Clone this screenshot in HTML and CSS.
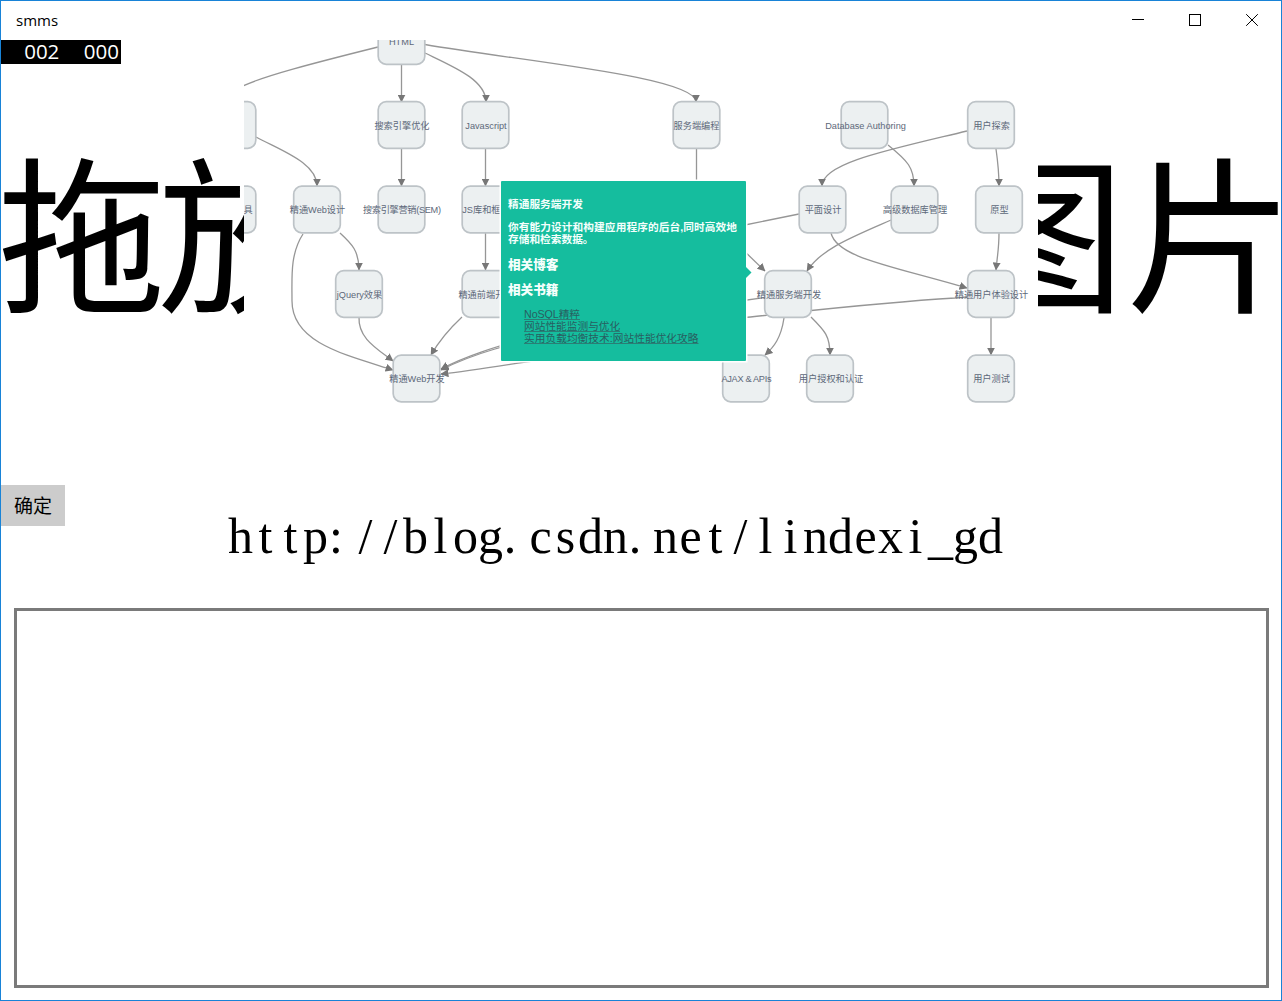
FILE: index.html
```html
<!DOCTYPE html>
<html lang="zh-CN">
<head>
<meta charset="utf-8">
<title>smms</title>
<link rel="stylesheet" href="styles.css">
</head>
<body>
<div class="window">
  <header class="titlebar">
    <span class="title">smms</span>
    <svg class="controls" viewBox="0 0 171 39" shape-rendering="crispEdges">
      <path d="M22 18.5h12"/>
      <rect x="79.5" y="13.5" width="11" height="11"/>
      <path class="close" shape-rendering="auto" d="M136.2 13.2l11.6 11.6M147.8 13.2l-11.6 11.6"/>
    </svg>
  </header>

  <main class="stage">
    <div class="counter"><span>002</span><span>000</span></div>
    <div class="headline"><span class="lead">拖放</span><span class="tail">图片</span></div>
    <svg class="diagram" viewBox="244 40 794 445">
      <defs>
        <marker id="arrow" markerUnits="userSpaceOnUse" markerWidth="8" markerHeight="8" viewBox="0 0 7 7" refX="6.5" refY="3.5" orient="auto"><path d="M0 0L7 3.5L0 7z"/></marker>
        <rect id="node" class="node" x="-23.3" y="-23.3" width="46.6" height="46.6" rx="8"/>
      </defs>
      <rect class="paper" x="244" y="40" width="794" height="445"/>
      <g class="edge">
        <path class="plain" d="M378 47C310 64 264 76 243 86"/>
        <path d="M401.5 65V102"/>
        <path d="M425 53C454 67 486 80 486 102"/>
        <path d="M425 44.500C520 61 696 77 696 102"/>
        <path d="M256 137C282 151 317 163 317 186"/>
        <path d="M401.500 149V186"/>
        <path d="M485.500 149V186"/>
        <path class="plain" d="M696.500 149V190"/>
        <path d="M303 234C290 254 292 277 292 301C292 343 346 355 393 370"/>
        <path d="M340 233C352 244 359 251 359 270"/>
        <path d="M485.500 233V270"/>
        <path d="M359 317C358 338 376 348 393 361"/>
        <path d="M462 317C447 331 439 341 431 355"/>
        <path d="M560 328C515 342 475 351 441 369"/>
        <path d="M560 333C510 344 474 353 441 370"/>
        <path d="M560 357C521 362 480 370 441 374"/>
        <path class="plain" d="M799 214L740 226"/>
        <path d="M740 247L765 271"/>
        <path class="plain" d="M740 301L768 297"/>
        <path class="plain" d="M740 318C800 312 872 303 955 298L978 296"/>
        <path d="M967 131C888 150 822 163 822 186"/>
        <path d="M888 145C908 161 914 168 914 186"/>
        <path d="M996 149C998 163 999 174 999 186"/>
        <path d="M891 220C852 237 821 249 807 271"/>
        <path d="M831 233C837 258 893 266 967 288"/>
        <path d="M999 233C999 249 997 258 996 270"/>
        <path d="M784 318C781 338 774 347 765 355"/>
        <path d="M811 317C825 331 830 336 830 355"/>
        <path d="M991 318V355"/>
      </g>
      <use href="#node" x="401.500" y="41"/>
      <use href="#node" x="232.500" y="125"/>
      <use href="#node" x="401.500" y="125"/>
      <use href="#node" x="485.500" y="125"/>
      <use href="#node" x="696.500" y="125"/>
      <use href="#node" x="864.500" y="125"/>
      <use href="#node" x="991" y="125"/>
      <use href="#node" x="232.500" y="209.500"/>
      <use href="#node" x="317" y="209.500"/>
      <use href="#node" x="401.500" y="209.500"/>
      <use href="#node" x="485.500" y="209.500"/>
      <use href="#node" x="822.500" y="209.500"/>
      <use href="#node" x="914.500" y="209.500"/>
      <use href="#node" x="999" y="209.500"/>
      <use href="#node" x="359" y="294"/>
      <use href="#node" x="485.500" y="294"/>
      <use href="#node" x="788" y="294"/>
      <use href="#node" x="991" y="294"/>
      <use href="#node" x="416.500" y="378.500"/>
      <use href="#node" x="746" y="378.500"/>
      <use href="#node" x="830" y="378.500"/>
      <use href="#node" x="991" y="378.500"/>
      <g class="label">
        <text x="401.500" y="44.500">HTML</text>
        <text x="402" y="129">搜索引擎优化</text>
        <text x="486" y="129">Javascript</text>
        <text x="696.500" y="129">服务端编程</text>
        <text x="865.500" y="129">Database Authoring</text>
        <text x="991.500" y="129">用户探索</text>
        <text x="248" y="213">具</text>
        <text x="317.500" y="213">精通Web设计</text>
        <text x="402" y="213" textLength="78">搜索引擎营销(SEM)</text>
        <text x="486" y="213">JS库和框架</text>
        <text x="823" y="213">平面设计</text>
        <text x="915" y="213">高级数据库管理</text>
        <text x="999.500" y="213">原型</text>
        <text x="359.500" y="297.500">jQuery效果</text>
        <text x="486" y="297.500">精通前端开发</text>
        <text x="789" y="297.500">精通服务端开发</text>
        <text x="991.500" y="297.500">精通用户体验设计</text>
        <text x="417" y="382">精通Web开发</text>
        <text x="746.500" y="382" textLength="50">AJAX &amp; APIs</text>
        <text x="831" y="382">用户授权和认证</text>
        <text x="991.500" y="382">用户测试</text>
      </g>
      <path class="halo" d="M499.500 179.500h248v183h-248z"/>
      <rect class="tip" x="501" y="181" width="245" height="180" rx="1"/>
      <path class="tip" d="M745.500 266.500L751.500 272.500L745.500 278.500z"/>
      <g class="tip-text">
        <text x="508" y="208">精通服务端开发</text>
        <text x="508" y="231" textLength="229">你有能力设计和构建应用程序的后台,同时高效地</text>
        <text x="508" y="243">存储和检索数据。</text>
        <text class="tip-heading" x="508" y="268.500">相关博客</text>
        <text class="tip-heading" x="508" y="293.700">相关书籍</text>
      </g>
      <g class="tip-link">
        <text x="524" y="317.500" textLength="56">NoSQL精粹</text>
        <text x="524" y="329.800">网站性能监测与优化</text>
        <text x="524" y="342" textLength="174.500">实用负载均衡技术:网站性能优化攻略</text>
        <path d="M524 319.500h56M524 331.500h96M524 343.500h174.500"/>
      </g>
    </svg>
  </main>

  <section class="actions">
    <button class="confirm">确定</button>
    <svg class="address" viewBox="0 0 790 80"><text y="68" x="12.500 37.500 62.500 87.500 108 137.500 162.500 187.500 212.500 237.500 262.500 282 312.500 337.500 362.500 387.500 407 437.500 462.500 487.500 512.500 537.500 562.500 587.500 612.500 637.500 662.500 687.500 712.500 737.500 762.500">http://blog.csdn.net/lindexi_gd</text></svg>
  </section>

  <textarea class="output" spellcheck="false"></textarea>
</div>
</body>
</html>
```
FILE: styles.css
```css
* { box-sizing: border-box; }

body {
  margin: 0;
  background: #fff;
  color: #000;
  font-family: "Open Sans", "Noto Sans CJK SC", sans-serif;
}

.window {
  display: grid;
  grid-template-rows: 39px 445px 123px 380px;
  grid-template-columns: 1280px;
  width: 1282px;
  height: 1001px;
  overflow: hidden;
  border: 1px solid #1883d7;
}

.titlebar {
  display: flex;
  align-items: center;
  justify-content: space-between;
  padding-left: 15px;
}

.title { font-size: 15px; line-height: 39px; }

.controls {
  width: 171px;
  height: 39px;
  fill: none;
  stroke: #000;
  stroke-width: 1;
}

/* The picture preview is stacked over the drop hint. */
.stage {
  display: grid;
  grid-template-columns: 1280px;
}

.stage > * { grid-area: 1 / 1; }

.counter {
  display: flex;
  justify-content: flex-end;
  gap: 24.500px;
  width: 120px;
  height: 24px;
  padding-right: 2px;
  background: #000;
  color: #fff;
  font-size: 20.500px;
  line-height: 22px;
}

.headline {
  display: flex;
  justify-content: space-between;
  height: 375px;
  margin: 0 -14px 0 -3px;
  font-family: "Noto Sans CJK SC", sans-serif;
  font-size: 168px;
  line-height: 373px;
  white-space: nowrap;
}

.lead { letter-spacing: -8px; }

.tail { letter-spacing: 1px; }

.diagram {
  width: 794px;
  height: 445px;
  margin-left: 243px;
  font-family: "Liberation Sans", "Noto Sans CJK SC", sans-serif;
}

.paper { fill: #fff; }

.node { fill: #ecf0f1; stroke: #bdc3c7; stroke-width: 1.700; }

.edge path { fill: none; stroke: #969696; stroke-width: 1.300; marker-end: url(#arrow); }

.edge .plain { marker-end: none; }

#arrow path { fill: #777; stroke: none; marker-end: none; }

.label { fill: #5d6879; font-size: 9.200px; text-anchor: middle; }

.halo { fill: #fff; }

.tip { fill: #15bd9e; }

.tip-text { fill: #f4fffc; font-size: 10.700px; font-weight: 700; }

.tip-heading { font-size: 12.600px; font-weight: 900; }

.tip-link { fill: #285f61; font-size: 10.700px; }

.tip-link path { stroke: #2c7770; stroke-width: 0.900; }

.actions {
  display: flex;
  align-items: flex-start;
}

.confirm {
  width: 64px;
  height: 41px;
  padding: 0 0 2px;
  border: 0;
  background: #ccc;
  color: #000;
  font-family: "Noto Sans CJK SC", sans-serif;
  font-size: 19px;
  line-height: 39px;
}

.address {
  width: 790px;
  height: 80px;
  margin-left: 163px;
  font-family: "Liberation Serif", serif;
  font-size: 50px;
  text-anchor: middle;
}

.output {
  margin: 0 12px 0 13px;
  border: 3px solid #7a7a7a;
  background: #fff;
  resize: none;
  outline: none;
}
```
